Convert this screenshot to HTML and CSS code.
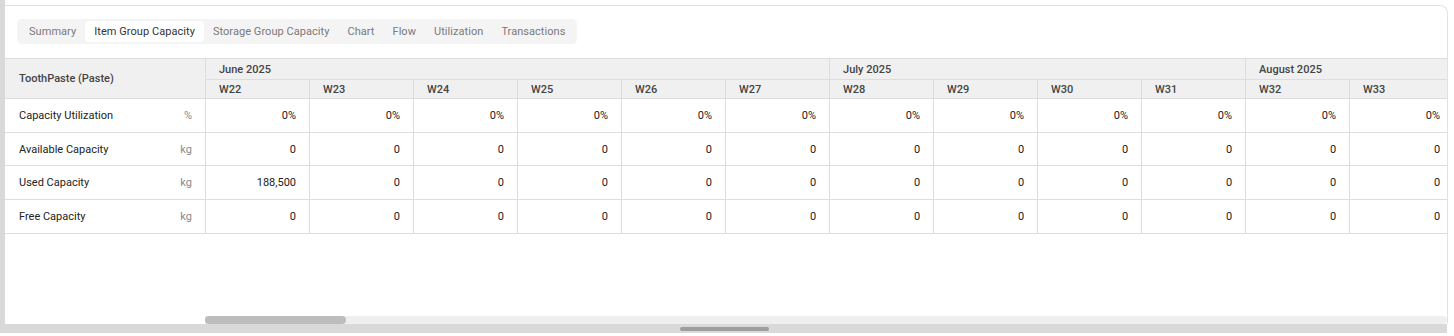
FILE: index.html
```html
<!DOCTYPE html>
<html lang="en">
<head>
  <meta charset="UTF-8">
  <meta name="viewport" content="width=device-width, initial-scale=1.0">
  <title>Item Group Capacity</title>
  <link rel="stylesheet" href="styles.css">
</head>
<body>
  <div class="page">
    <div class="side"></div>
    <div class="main">
      <div class="card">
        <div class="tabs-row">
          <div class="tabs">
            <span class="tab">Summary</span>
            <span class="tab active">Item Group Capacity</span>
            <span class="tab">Storage Group Capacity</span>
            <span class="tab">Chart</span>
            <span class="tab">Flow</span>
            <span class="tab">Utilization</span>
            <span class="tab">Transactions</span>
          </div>
        </div>

        <div class="grid-wrap">
          <table class="grid">
            <colgroup>
              <col class="col-name">
              <col class="col-week"><col class="col-week"><col class="col-week"><col class="col-week">
              <col class="col-week"><col class="col-week"><col class="col-week"><col class="col-week">
              <col class="col-week"><col class="col-week"><col class="col-week"><col class="col-week">
            </colgroup>
            <thead>
              <tr class="month-row">
                <th class="name-head" rowspan="2">ToothPaste (Paste)</th>
                <th colspan="6">June 2025</th>
                <th colspan="4">July 2025</th>
                <th colspan="2">August 2025</th>
              </tr>
              <tr class="week-row" id="week-row"></tr>
            </thead>
            <tbody id="grid-body"></tbody>
          </table>
        </div>

        <div class="hscroll">
          <div class="hscroll-thumb"></div>
        </div>
      </div>
      <div class="outer-scroll">
        <div class="outer-thumb"></div>
      </div>
    </div>
  </div>

  <script>
    const weeks = ['W22', 'W23', 'W24', 'W25', 'W26', 'W27', 'W28', 'W29', 'W30', 'W31', 'W32', 'W33'];

    const rows = [
      { label: 'Capacity Utilization', unit: '%', values: ['0%', '0%', '0%', '0%', '0%', '0%', '0%', '0%', '0%', '0%', '0%', '0%'] },
      { label: 'Available Capacity', unit: 'kg', values: ['0', '0', '0', '0', '0', '0', '0', '0', '0', '0', '0', '0'] },
      { label: 'Used Capacity', unit: 'kg', values: ['188,500', '0', '0', '0', '0', '0', '0', '0', '0', '0', '0', '0'] },
      { label: 'Free Capacity', unit: 'kg', values: ['0', '0', '0', '0', '0', '0', '0', '0', '0', '0', '0', '0'] }
    ];

    const weekRow = document.getElementById('week-row');
    weeks.forEach(w => {
      const th = document.createElement('th');
      th.textContent = w;
      weekRow.appendChild(th);
    });

    const body = document.getElementById('grid-body');
    rows.forEach(row => {
      const tr = document.createElement('tr');

      const nameCell = document.createElement('td');
      nameCell.className = 'name-cell';
      nameCell.innerHTML = `<div class="name-inner"><span>${row.label}</span><span class="unit">${row.unit}</span></div>`;
      tr.appendChild(nameCell);

      row.values.forEach(v => {
        const td = document.createElement('td');
        td.className = 'num';
        td.textContent = v;
        tr.appendChild(td);
      });

      body.appendChild(tr);
    });
  </script>
</body>
</html>
```

FILE: styles.css
```css
body {
  margin: 0;
  padding: 0;
  background-color: #fff;
  font-family: Roboto, "Liberation Sans", Arial, sans-serif;
  font-size: 11px;
  color: #222;
}

.page {
  display: flex;
  height: 336px;
  overflow: hidden;
}

.side {
  width: 5px;
  height: 333px;
  background-color: #d9d9d9;
  flex-shrink: 0;
}

.main {
  width: 1443px;
  flex-shrink: 0;
}

.card {
  margin-top: 5px;
  height: 318px;
  border-top: 1px solid #e2e2e2;
  border-right: 1px solid #e2e2e2;
  border-top-right-radius: 8px;
  display: flex;
  flex-direction: column;
}

.tabs-row {
  padding: 13px 12px 14px;
  display: flex;
}

.tabs {
  display: flex;
  align-items: center;
  height: 25px;
  padding: 0 3px;
  background-color: #f4f4f4;
  border-radius: 5px;
}

.tab {
  padding: 0 9px;
  height: 21px;
  line-height: 22px;
  color: #7a7a7a;
  letter-spacing: 0.05px;
  border-radius: 4px;
}

.tab.active {
  background-color: #fff;
  color: #333;
}

.grid-wrap {
  flex: 1;
  overflow: hidden;
  border-top: 1px solid #dddddd;
}

.grid {
  table-layout: fixed;
  border-collapse: separate;
  border-spacing: 0;
  width: 1449px;
}

.col-name {
  width: 201px;
}

.col-week {
  width: 104px;
}

th, td {
  border-right: 1px solid #dddddd;
  border-bottom: 1px solid #dddddd;
  padding: 0 13px;
  white-space: nowrap;
  overflow: hidden;
}

th {
  background-color: #f0f0f0;
  font-weight: 500;
  color: #444;
  text-align: left;
}

.month-row th {
  height: 20px;
}

.week-row th {
  height: 18px;
}

.name-head {
  padding-left: 14px;
}

td {
  height: 33px;
}

tbody tr:nth-child(2) td {
  height: 32px;
}

.name-cell {
  padding-left: 14px;
}

.name-inner {
  display: flex;
  justify-content: space-between;
}

.unit {
  color: #8a8a8a;
}

.num {
  text-align: right;
}

.hscroll {
  height: 8px;
  margin-left: 200px;
  background-color: #efefef;
  border-radius: 0 4px 4px 0;
  flex-shrink: 0;
}

.hscroll-thumb {
  width: 141px;
  height: 8px;
  background-color: #bdbdbd;
  border-radius: 4px;
}

.outer-scroll {
  height: 9px;
  margin-left: -5px;
  width: 1447px;
  background-color: #d9d9d9;
  display: flex;
  align-items: center;
}

.outer-thumb {
  margin-left: 680px;
  width: 89px;
  height: 4px;
  background-color: #9e9e9e;
  border-radius: 2px;
}
```
